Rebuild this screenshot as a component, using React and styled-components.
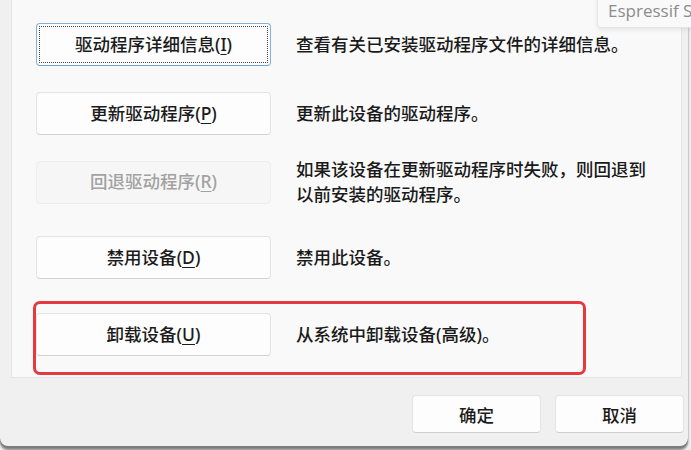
import React from "react";
import styled, { createGlobalStyle } from "styled-components";

const Global = createGlobalStyle`
  html, body {
    margin: 0;
    padding: 0;
    background: #eeeeee;
    overflow: hidden;
  }
  body {
    font-family: "Noto Sans", "Noto Sans CJK SC", sans-serif;
  }
`;

const Page = styled.div`
  position: relative;
  width: 691px;
  height: 450px;
  overflow: hidden;
`;

const Window = styled.div`
  width: 688px;
  height: 446px;
  background: #f0f0f0;
  border-radius: 0 0 8px 8px;
  box-shadow: 0 2px 1px #7c7c7c, 0 4px 2px #8a8a8a;
  overflow: hidden;
  display: flex;
  flex-direction: column;
`;

const Panel = styled.div`
  margin-left: 11px;
  width: 671px;
  height: 378px;
  background: #f9f9f9;
  border: 1px solid #e4e4e4;
  border-top: none;
  padding: 23px 0 0 24px;
  box-sizing: border-box;
  display: flex;
  flex-direction: column;
`;

const Row = styled.div`
  position: relative;
  display: flex;
  align-items: center;
  gap: 25px;
  margin-top: ${({ $space }) => $space}px;
`;

const ActionButton = styled.button`
  flex: none;
  width: 235px;
  height: 43px;
  padding: 0;
  box-sizing: border-box;
  border-radius: 4px;
  font-family: "Noto Sans", "Noto Sans CJK SC", sans-serif;
  font-size: 17.5px;
  font-weight: 500;
  line-height: 1;
  color: ${({ disabled }) => (disabled ? "#a2a2a2" : "#1b1b1b")};
  background: ${({ disabled }) => (disabled ? "#f6f6f6" : "#fdfdfd")};
  border: 1px solid ${({ $focused, disabled }) =>
    $focused ? "#7fb1dc" : disabled ? "#eeeeee" : "#e3e3e3"};
  border-bottom-color: ${({ $focused, disabled }) =>
    $focused ? "#6ba3d3" : disabled ? "#eeeeee" : "#d2d2d2"};
  outline: ${({ $focused }) => ($focused ? "1px dotted #444" : "none")};
  outline-offset: -4px;

  u {
    text-underline-offset: 3px;
    text-decoration-thickness: 1px;
  }
`;

const Description = styled.div`
  width: 362px;
  font-size: 17.5px;
  font-weight: 500;
  line-height: 25px;
  color: #1a1a1a;
`;

const Highlight = styled.div`
  position: absolute;
  left: -3px;
  top: -12px;
  width: 553px;
  height: 74px;
  box-sizing: border-box;
  border: 3px solid #e5383f;
  border-radius: 7px;
  pointer-events: none;
`;

const Footer = styled.div`
  display: flex;
  justify-content: flex-end;
  gap: 14px;
  padding: 17px 4px 0 0;
`;

const DialogButton = styled.button`
  width: 129px;
  height: 38px;
  box-sizing: border-box;
  background: #fdfdfd;
  border: 1px solid #e3e3e3;
  border-bottom-color: #cfcfcf;
  border-radius: 4px;
  font-family: "Noto Sans", "Noto Sans CJK SC", sans-serif;
  font-size: 17.5px;
  font-weight: 500;
  color: #1b1b1b;
`;

const Tooltip = styled.div`
  position: absolute;
  top: -8px;
  left: 597px;
  height: 36px;
  padding: 5px 10px 0 10px;
  box-sizing: border-box;
  background: #f9f9f9;
  border: 1px solid #e6e6e6;
  border-radius: 4px;
  box-shadow: 0 2px 4px rgba(0, 0, 0, 0.08);
  font-family: "Open Sans", "Noto Sans", sans-serif;
  font-size: 17px;
  line-height: 26px;
  color: #8c8c8c;
  white-space: nowrap;
`;

const rows = [
  { label: "驱动程序详细信息", key: "I", text: "查看有关已安装驱动程序文件的详细信息。", space: 0, focused: true },
  { label: "更新驱动程序", key: "P", text: "更新此设备的驱动程序。", space: 26 },
  { label: "回退驱动程序", key: "R", text: "如果该设备在更新驱动程序时失败，则回退到以前安装的驱动程序。", space: 22, disabled: true },
  { label: "禁用设备", key: "D", text: "禁用此设备。", space: 29 },
  { label: "卸载设备", key: "U", text: "从系统中卸载设备(高级)。", space: 34, marked: true },
];

export default function App() {
  return (
    <>
      <Global />
      <Page>
        <Window>
          <Panel>
            {rows.map((r) => (
              <Row key={r.key} $space={r.space}>
                <ActionButton $focused={r.focused} disabled={r.disabled}>
                  {r.label}(<u>{r.key}</u>)
                </ActionButton>
                <Description>{r.text}</Description>
                {r.marked && <Highlight />}
              </Row>
            ))}
          </Panel>
          <Footer>
            <DialogButton>确定</DialogButton>
            <DialogButton>取消</DialogButton>
          </Footer>
        </Window>
        <Tooltip>Espressif Systems</Tooltip>
      </Page>
    </>
  );
}
